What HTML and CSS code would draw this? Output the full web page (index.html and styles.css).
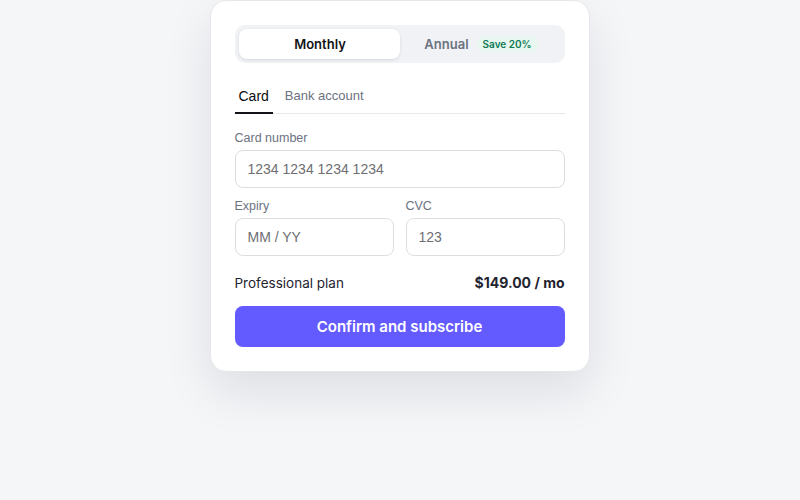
FILE: index.html
```html
<!DOCTYPE html>
<html>
<head>
<meta charset="utf-8">
<link rel="stylesheet" href="styles.css">
</head>
<body>
<div class="page">
  <div class="card">
    <div class="segment">
      <button class="seg-btn active">Monthly</button>
      <button class="seg-btn">Annual <span class="badge">Save 20%</span></button>
    </div>
    <div class="tabs">
      <div class="tab active">Card</div>
      <div class="tab">Bank account</div>
    </div>
    <div class="field">
      <label class="label">Card number</label>
      <input class="input" placeholder="1234 1234 1234 1234">
    </div>
    <div class="row">
      <div class="field">
        <label class="label">Expiry</label>
        <input class="input" placeholder="MM / YY">
      </div>
      <div class="field">
        <label class="label">CVC</label>
        <input class="input" placeholder="123">
      </div>
    </div>
    <div class="summary">
      <span class="plan">Professional plan</span>
      <span class="price">$149.00 / mo</span>
    </div>
    <button class="cta">Confirm and subscribe</button>
  </div>
</div>
</body>
</html>
```

FILE: styles.css
```css
html, body {
  margin: 0;
  padding: 0;
  height: 100%;
  background: #f5f6f8;
  font-family: Inter, "Liberation Sans", sans-serif;
}
.page {
  display: flex;
  justify-content: center;
  align-items: flex-start;
  min-height: 100%;
}
.card {
  width: 330px;
  padding: 24px;
  background: #fff;
  border: 1px solid #e6e7eb;
  border-radius: 16px;
  box-shadow: 0 20px 48px rgba(17, 24, 39, 0.1);
  margin-left: -1px;
}
.segment {
  display: flex;
  background: #f1f2f6;
  border-radius: 10px;
  padding: 4px;
}
.seg-btn {
  flex: 1;
  height: 30px;
  border: none;
  background: transparent;
  border-radius: 8px;
  font-family: Inter, sans-serif;
  font-weight: 600;
  font-size: 13px;
  color: #6b7280;
  display: flex;
  align-items: center;
  justify-content: center;
  gap: 8px;
  padding: 0 0 0 2px;
}
.seg-btn.active {
  background: #fff;
  color: #111318;
  box-shadow: 0 1px 3px rgba(17, 24, 39, 0.12);
}
.badge {
  background: #e8f8f0;
  color: #0f7a55;
  font-size: 10px;
  font-weight: 600;
  padding: 2px 6px;
  border-radius: 9px;
}
.tabs {
  display: flex;
  align-items: flex-end;
  gap: 8px;
  margin-top: 19px;
  border-bottom: 1px solid #e8e9ee;
}
.tab {
  padding: 4px 4px 6px;
  font-family: "Liberation Sans", Arial, sans-serif;
  font-size: 13px;
  line-height: 20px;
  color: #6b7280;
  border-bottom: 2px solid transparent;
  margin-bottom: -1px;
}
.tab.active {
  color: #0b0d12;
  font-size: 14px;
  border-bottom-color: #111318;
}
.field {
  display: flex;
  flex-direction: column;
  margin-top: 16px;
  flex: 1;
  min-width: 0;
}
.label {
  font-family: "Liberation Sans", Arial, sans-serif;
  font-size: 12.5px;
  color: #6b7280;
  line-height: 16px;
  margin-bottom: 4px;
}
.input {
  height: 38px;
  box-sizing: border-box;
  border: 1px solid #dcdee4;
  border-radius: 8px;
  padding: 0 12px;
  font-family: "Liberation Sans", Arial, sans-serif;
  font-size: 14px;
  color: #333;
  outline: none;
  width: 100%;
}
.input::placeholder {
  color: #6e6e73;
}
.row {
  display: flex;
  gap: 12px;
}
.row .field {
  margin-top: 10px;
}
.summary {
  display: flex;
  justify-content: space-between;
  align-items: center;
  margin-top: 17px;
  font-size: 13.5px;
  line-height: 20px;
  color: #1f2430;
}
.price {
  font-size: 14px;
  font-weight: 700;
}
.cta {
  margin-top: 13px;
  width: 100%;
  height: 41px;
  border: none;
  border-radius: 8px;
  background: #635bff;
  color: #fff;
  font-family: Inter, sans-serif;
  font-weight: 600;
  font-size: 15px;
  display: block;
}
```
